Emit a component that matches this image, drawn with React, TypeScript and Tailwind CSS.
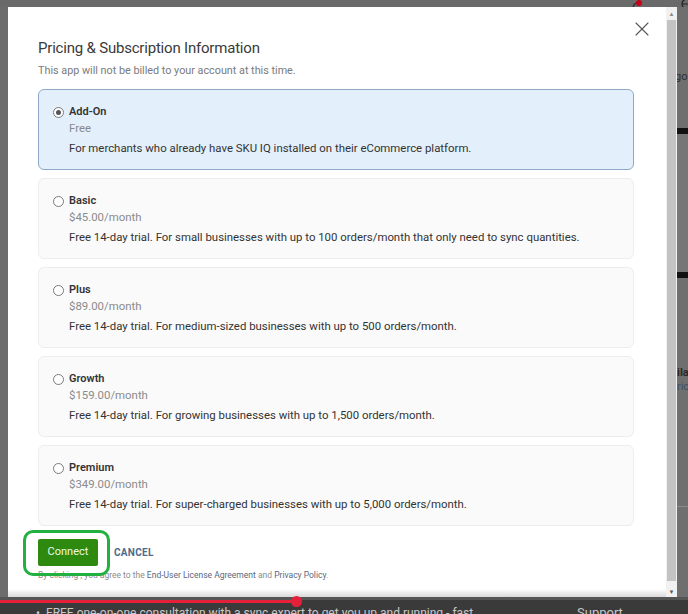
import { X } from "lucide-react";

const plans = [
  { name: "Add-On", price: "Free", desc: "For merchants who already have SKU IQ installed on their eCommerce platform.", selected: true },
  { name: "Basic", price: "$45.00/month", desc: "Free 14-day trial. For small businesses with up to 100 orders/month that only need to sync quantities." },
  { name: "Plus", price: "$89.00/month", desc: "Free 14-day trial. For medium-sized businesses with up to 500 orders/month." },
  { name: "Growth", price: "$159.00/month", desc: "Free 14-day trial. For growing businesses with up to 1,500 orders/month." },
  { name: "Premium", price: "$349.00/month", desc: "Free 14-day trial. For super-charged businesses with up to 5,000 orders/month." },
];

function Radio({ checked }: { checked?: boolean }) {
  return (
    <span className="mt-[3px] flex h-[11px] w-[11px] shrink-0 items-center justify-center rounded-full border border-[#7a7a7a] bg-white">
      {checked && <span className="h-[5px] w-[5px] rounded-full bg-[#555]" />}
    </span>
  );
}

function PlanCard({ plan }: { plan: (typeof plans)[number] }) {
  return (
    <div
      className={`flex h-[81px] gap-[5px] rounded-[6px] border pl-[14px] pt-[14px] ${
        plan.selected ? "border-[#8eaac6] bg-[#e3effb]" : "border-[#ededed] bg-[#fafafa]"
      }`}
    >
      <Radio checked={plan.selected} />
      <div className="flex flex-col">
        <span className="text-[11px] font-semibold leading-[16px] text-[#333]">{plan.name}</span>
        <span className="text-[11.4px] leading-[16px] text-[#8a8a8a]">{plan.price}</span>
        <span className="mt-[4px] text-[11.4px] leading-[16px] text-[#333]">{plan.desc}</span>
      </div>
    </div>
  );
}

export default function App() {
  return (
    <div className="relative h-[614px] w-[688px] overflow-hidden bg-[#6e6e6e] font-['Roboto','Liberation_Sans',sans-serif]">
      {/* top strip of the page behind */}
      <div className="flex h-[7px] items-start justify-end bg-[#6a6a6a]">
        <svg width="12" height="10" viewBox="0 0 12 10" className="mr-[36px]">
          <path d="M2 9 A4 4 0 0 1 6 3" fill="none" stroke="#333" strokeWidth="1.4" />
          <circle cx="7" cy="3" r="3" fill="#c4001a" />
        </svg>
        <svg width="8" height="12" viewBox="0 0 8 12" className="-mt-[2px]">
          <circle cx="7" cy="6" r="5" fill="none" stroke="#222" strokeWidth="1.2" />
          <path d="M2 6 H8" stroke="#222" strokeWidth="1" />
        </svg>
      </div>

      <div className="flex h-[590px]">
        <div className="w-[8px] shrink-0 bg-[#6c6c6c]" />

        {/* modal */}
        <div className="relative flex w-[658px] shrink-0 flex-col bg-white pl-[30px] pr-[32px]">
          <div className="flex h-[15px] justify-end pt-[10px]">
            <X size={24} strokeWidth={1.1} className="-mr-[20px] shrink-0 text-[#555]" />
          </div>
          <h2 className="mt-[16px] text-[15px] font-normal leading-[20px] tracking-[-0.2px] text-[#3a3a3a]">
            Pricing &amp; Subscription Information
          </h2>
          <p className="mt-[6px] text-[10.8px] leading-[14px] text-[#7a7a7a]">
            This app will not be billed to your account at this time.
          </p>

          <div className="mt-[11px] flex flex-col gap-[8px]">
            {plans.map((p) => (
              <PlanCard key={p.name} plan={p} />
            ))}
          </div>

          <div className="relative mt-[13px] flex items-center gap-[16px]">
            <button className="h-[27px] w-[60px] rounded-[2px] bg-[#2d8a0f] text-[11px] text-[#eef8e8]">Connect</button>
            <span className="text-[10px] font-bold tracking-[0.3px] text-[#4e6a8c]">CANCEL</span>
            {/* annotation outline */}
            <div className="pointer-events-none absolute -left-[15px] -top-[9px] h-[46px] w-[87px] rounded-[10px] border-[3px] border-[#22b040]" />
          </div>
          <p className="mt-[4px] text-[8.5px] leading-[10px] text-[#8c8c8c]">
            By clicking , you agree to the <span className="text-[#5a6880]">End-User License Agreement</span> and{" "}
            <span className="text-[#5a6880]">Privacy Policy</span>.
          </p>
          <div className="-ml-[30px] -mr-[32px] mt-auto h-[8px] bg-gradient-to-b from-white to-[#d8d8d8]" />
        </div>

        {/* scrollbar */}
        <div className="flex w-[11px] shrink-0 flex-col items-center bg-[#f1f1f1]">
          <span className="mt-[4px] text-[6px] leading-[6px] text-[#888]">▲</span>
          <div className="mt-[3px] w-[9px] flex-1 bg-[#c3c3c3]" />
          <span className="mb-[2px] mt-[8px] text-[6px] leading-[6px] text-[#555]">▼</span>
        </div>

        {/* sliver of the page behind */}
        <div className="flex min-w-0 flex-1 flex-col overflow-hidden whitespace-nowrap bg-[#6f6f6f]">
          <span className="-ml-[2px] mt-[64px] text-[11px] leading-[12px] text-[#2e2e2e]">go</span>
          <div className="mt-[45px] h-[6px] bg-[#111]" />
          <div className="h-[138px] bg-[#767676]" />
          <div className="h-[6px] bg-[#111]" />
          <span className="mt-[88px] text-[11px] font-bold leading-[14px] text-[#2a2a2a]">ila</span>
          <span className="-ml-[2px] text-[11px] leading-[14px] text-[#3f4f6a]">'ric</span>
          <div className="mt-[112px] h-px bg-[#8a8a8a]" />
        </div>
      </div>

      {/* video bar */}
      <div className="h-[17px] border-t-[3px] border-[#555] bg-[#3a3a3a] pl-[36px] pt-[5px]">
        <div className="flex items-start whitespace-nowrap text-[12px] leading-[16px] text-[#c8c8c8]">
          <span className="w-[505px]">•&nbsp;&nbsp;FREE one-on-one consultation with a sync expert to get you up and running - fast.</span>
          <span className="ml-[36px] text-[13px]">Support</span>
        </div>
      </div>
      <div className="absolute left-0 top-[600px] h-[3px] w-[296px] bg-[#e4203a]" />
      <div className="absolute left-[291px] top-[596px] h-[11px] w-[11px] rounded-full bg-[#e4203a]" />
    </div>
  );
}
